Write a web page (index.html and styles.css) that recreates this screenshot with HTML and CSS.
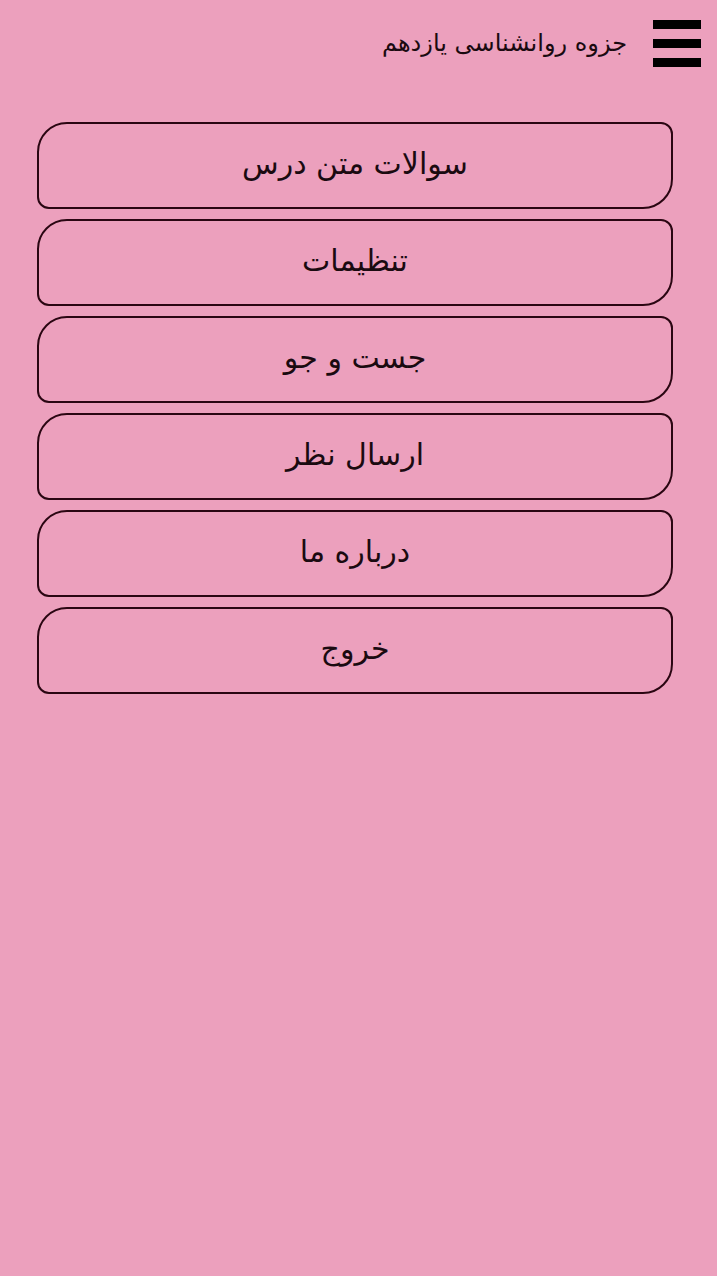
FILE: index.html
```html
<!DOCTYPE html>
<html lang="fa" dir="rtl">

<head>
    <meta charset="UTF-8">
    <meta name="viewport" content="width=device-width, initial-scale=1.0">
    <title>جزوه روانشناسی یازدهم</title>
    <link rel="stylesheet" href="styles.css">
</head>

<body>
    <div class="header">
        <div class="menu_icon">
            <span></span>
            <span></span>
            <span></span>
        </div>
        <h3 class="title">جزوه روانشناسی یازدهم</h3>
    </div>

    <div class="list">
        <div class="btn">سوالات متن درس</div>
        <div class="btn">تنظیمات</div>
        <div class="btn">جست و جو</div>
        <div class="btn">ارسال نظر</div>
        <div class="btn">درباره ما</div>
        <div class="btn">خروج</div>
    </div>
</body>

</html>
```

FILE: styles.css
```css
body {
    margin: 0;
    background-color: rgb(236, 160, 189);
    font-family: "DejaVu Sans", "Noto Sans", sans-serif;
    color: #1a0a10;
    min-height: 1276px;
}

.header {
    display: flex;
    align-items: center;
    height: 86px;
    padding-right: 16px;
}

.menu_icon {
    display: flex;
    flex-direction: column;
    gap: 10px;
    width: 48px;
}

.menu_icon>span {
    display: block;
    height: 9px;
    background-color: black;
}

.title {
    margin: 0 26px 0 0;
    font-size: 24px;
    font-weight: normal;
}

.list {
    display: flex;
    flex-direction: column;
    gap: 10px;
    margin: 36px 44px 0 37px;
}

.btn {
    height: 83px;
    border: 2px solid #2a0612;
    border-radius: 30px 12px 30px 12px;
    display: flex;
    justify-content: center;
    align-items: center;
    padding-bottom: 4px;
    box-sizing: border-box;
    height: 87px;
    font-size: 30px;
}
```
